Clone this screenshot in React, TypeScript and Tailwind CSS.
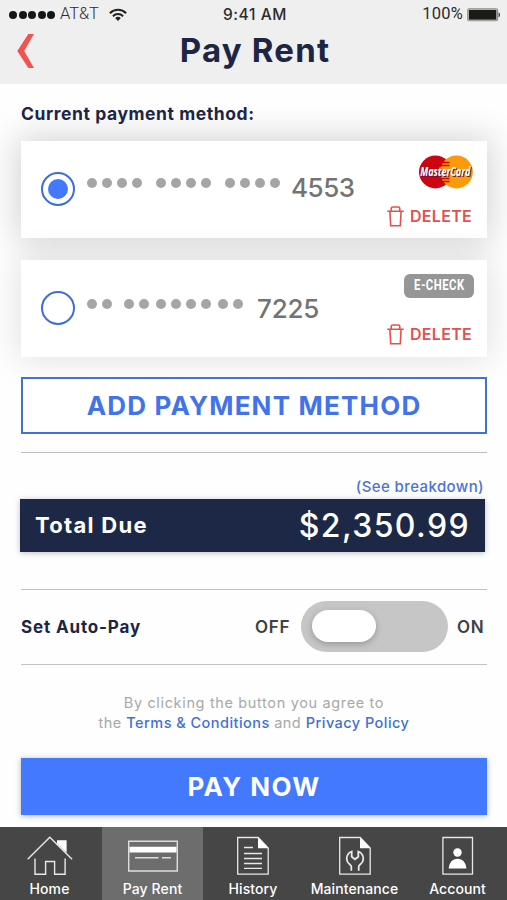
import { useState } from "react";

function Chevron() {
  return (
    <svg width="18" height="34" viewBox="0 0 18 34" className="block">
      <path d="M11.3 0H17L7.2 17 17 34h-5.7L.3 17z" fill="#f0544f" />
    </svg>
  );
}

function Wifi() {
  return (
    <svg width="18" height="14" viewBox="0 0 18 14" className="block" fill="none" stroke="#222" strokeWidth="2">
      <path d="M.9 5.2a11.5 11.5 0 0 1 16.2 0M3.9 8.2a7.2 7.2 0 0 1 10.2 0" />
      <path d="M9 13 6.2 10.1a4 4 0 0 1 5.6 0z" fill="#222" stroke="none" />
    </svg>
  );
}

function Battery() {
  return (
    <svg width="34" height="14" viewBox="0 0 34 14" className="block">
      <rect x=".75" y=".75" width="29.8" height="12" rx="1.5" fill="#efefef" stroke="#8c8c88" strokeWidth="1.2" />
      <rect x="1.8" y="1.8" width="27.6" height="9.9" fill="#1c1a15" />
      <path d="M31.5 4.5c2 .4 2 4.3 0 4.8z" fill="#444" />
    </svg>
  );
}

function Trash() {
  return (
    <svg width="17" height="21" viewBox="0 0 17 21" className="block" fill="none" stroke="#e2504f" strokeWidth="1.6">
      <path d="M.3 5.3h16.4M4.2 5.2V2.6Q4.200 1 5.800 1h5.400q1.600 0 1.600 1.600v2.600M2.900 5.500l.8 14.200h9.600l.8-14.200" />
    </svg>
  );
}

function MasterCard() {
  return (
    <svg width="56" height="34" viewBox="0 0 56 34" className="block overflow-visible">
      <circle cx="17.400" cy="17" r="16.400" fill="#cc0510" />
      <circle cx="38.500" cy="17" r="16.400" fill="#fb9a0b" />
      <path d="M23.500 7.500h8M22.500 10.500h9M22.500 23.500h9M23.500 26.500h8" stroke="#cc0510" strokeWidth="1.300" />
      <text x="3.300" y="21.900" textLength="50" lengthAdjust="spacingAndGlyphs" fontFamily="Open Sans" fontWeight="700" fontStyle="italic" fontSize="11.500" fill="#4c1b4b">MasterCard</text>
      <text x="2.300" y="21" textLength="50" lengthAdjust="spacingAndGlyphs" fontFamily="Open Sans" fontWeight="700" fontStyle="italic" fontSize="11.500" fill="#fff">MasterCard</text>
    </svg>
  );
}

function DotGroup({ count, className = "" }: { count: number; className?: string }) {
  return (
    <div className={`flex gap-[5px] ${className}`}>
      {Array.from({ length: count }, (_, i) => (
        <span key={i} className="size-[10px] rounded-full bg-[#a5a5a5]" />
      ))}
    </div>
  );
}

function Radio({ on, onClick }: { on: boolean; onClick: () => void }) {
  return (
    <button
      role="radio"
      aria-checked={on}
      onClick={onClick}
      className="flex size-[34px] shrink-0 items-center justify-center rounded-full border-[2.5px] border-[#3f6cd8] bg-white"
    >
      {on && <span className="size-[20px] rounded-full bg-[#4279ff]" />}
    </button>
  );
}

function Delete() {
  return (
    <button className="flex items-center gap-[6px] text-[16px] leading-[21px] font-semibold tracking-[0.3px] text-[#e2504f]">
      <Trash />
      <span>DELETE</span>
    </button>
  );
}

const tabs = [
  {
    label: "Home",
    shift: "pr-[3px]",
    icon: (
      <svg width="46" height="40" viewBox="0 0 46 40" fill="none" stroke="#e8e8e8" strokeWidth="1.4">
        <path d="M.7 23.3 22.8 1.2l22.3 22.1M8 22.5v15.8h10.6V25.5h9v12.8h10.5V22.5" />
        <path d="M30 4.2h9.6v12.6L30 7.5z" fill="#fff" stroke="none" />
      </svg>
    ),
  },
  {
    label: "Pay Rent",
    shift: "",
    icon: (
      <svg width="50" height="40" viewBox="0 0 50 40" fill="none" stroke="#dedede" strokeWidth="1.4">
        <path d="M.7 5.2h48.600v29.800H.7z" />
        <path d="M1.500 10.800h47v5.600h-47z" fill="#fff" stroke="none" />
        <path d="M7 21.700h23.500M34 21.700h9" />
      </svg>
    ),
  },
  {
    label: "History",
    shift: "pr-[2px]",
    icon: (
      <svg width="32" height="40" viewBox="0 0 32 40" fill="none" stroke="#e8e8e8" strokeWidth="1.3">
        <path d="M.7 1.5h20.5l10 10.5v26.2H.7z" />
        <path d="M21 1.3v10.9h10.3z" fill="#fff" stroke="none" />
        <path d="M7 11.5h9M7 17.5h18M7 22.5h18M7 27.5h18M7 32.3h18" />
      </svg>
    ),
  },
  {
    label: "Maintenance",
    shift: "pr-[2px]",
    icon: (
      <svg width="32" height="40" viewBox="0 0 32 40" fill="none" stroke="#e8e8e8" strokeWidth="1.3">
        <path d="M.7 1.5h20.5l10 10.5v26.2H.7z" />
        <path d="M21 1.3v10.9h10.3z" fill="#fff" stroke="none" />
        <path d="M12.300 34.800v-4.300c0-1.800-4.600-2.800-4.600-7.600 0-3.800 2.300-6.300 5-7.400v5.200l3.300 2.600 3.300-2.600v-5.200c2.700 1.100 5 3.600 5 7.400 0 4.800-4.600 5.800-4.600 7.600v4.300" strokeWidth="1.800" />
      </svg>
    ),
  },
  {
    label: "Account",
    shift: "pl-[2px]",
    icon: (
      <svg width="32" height="40" viewBox="0 0 32 40" fill="none" stroke="#e8e8e8" strokeWidth="1.3">
        <path d="M.9 1.5h29.600v36.700H.9z" />
        <circle cx="15.500" cy="16.500" r="4.200" fill="#fff" stroke="none" />
        <path d="M6.700 32.500c.6-6.200 3.800-9.700 8.800-9.700s8.300 3.500 8.900 9.700z" fill="#fff" stroke="none" />
      </svg>
    ),
  },
];

export default function App() {
  const [selected, setSelected] = useState(0);
  const [tab, setTab] = useState(1);
  const [auto, setAuto] = useState(false);

  return (
    <div className="flex h-[900px] w-[507px] flex-col overflow-hidden bg-[#fefefe] font-['Inter',sans-serif] text-[#1d2545]">
      <header className="h-[84px] shrink-0 bg-[#efefef]">
        <div className="grid h-[29px] grid-cols-[1fr_auto_1fr] items-center pr-[6px] pl-[9px] text-[16px] text-[#2c2c2c]">
          <div className="flex items-center">
            <div className="flex gap-[1.5px]">
              {[0, 1, 2, 3, 4].map((i) => (
                <span key={i} className="size-[8px] rounded-full bg-[#161616]" />
              ))}
            </div>
            <span className="ml-[5px] w-[49px] font-['Roboto',sans-serif] text-[16.5px] font-light tracking-[-0.1px]">AT&amp;T</span>
            <Wifi />
          </div>
          <span className="text-[15.5px] font-medium tracking-[0.6px]">9:41 AM</span>
          <div className="flex items-center justify-end gap-[4px]">
            <span className="font-['Roboto',sans-serif] text-[16.5px] tracking-[0.2px]">100%</span>
            <Battery />
          </div>
        </div>
        <div className="grid h-[44px] grid-cols-[40px_1fr_40px] items-center px-[17px]">
          <button aria-label="Back"><Chevron /></button>
          <h1 className="pb-[2px] pl-[3px] text-center text-[33px] leading-none font-bold tracking-[1.2px]">Pay Rent</h1>
        </div>
      </header>

      <main className="flex grow flex-col pr-[20px] pl-[21px]">
        <h2 className="relative z-10 mt-[17px] h-[26px] text-[17.5px] leading-[26px] font-bold tracking-[0.57px] whitespace-nowrap">Current payment method:</h2>
        <section className="mt-[14px] flex h-[97px] shrink-0 bg-white pr-[12px] pl-[20px] shadow-[0_0_32px_4px_rgba(0,0,0,0.17)]">
          <div className="flex grow pt-[31px]">
            <Radio on={selected === 0} onClick={() => setSelected(0)} />
            <div className="ml-[12px] flex items-start pt-[6px]">
              <DotGroup count={4} />
              <DotGroup count={4} className="ml-[14px]" />
              <DotGroup count={4} className="ml-[14px]" />
              <span className="ml-[11px] text-[26px] leading-[20px] font-medium tracking-[-0.5px] text-[#737373]">4553</span>
            </div>
          </div>
          <div className="flex flex-col items-end justify-between pt-[14px] pr-[1px] pb-[11px]">
            <MasterCard />
            <div className="pr-[2px]"><Delete /></div>
          </div>
        </section>
        <section className="relative mt-[22px] flex h-[97px] shrink-0 bg-white pr-[12px] pl-[20px] shadow-[0_0_32px_2px_rgba(0,0,0,0.12)]">
          <div className="flex grow pt-[31px]">
            <Radio on={selected === 1} onClick={() => setSelected(1)} />
            <div className="ml-[12px] flex items-start pt-[7.5px]">
              <DotGroup count={2} />
              <DotGroup count={2} className="ml-[12px]" />
              <DotGroup count={4} className="ml-[7px]" />
              <DotGroup count={2} className="ml-[7px]" />
              <span className="ml-[14px] text-[26px] leading-[20px] font-medium tracking-[-0.2px] text-[#737373]">7225</span>
            </div>
          </div>
          <div className="flex flex-col items-end justify-between pt-[14px] pr-[1px] pb-[12px]">
            <span className="flex h-[24px] w-[70px] items-center justify-center rounded-[6px] bg-[#969696] font-['Roboto',sans-serif] text-[14.5px] font-bold tracking-[0.6px] text-white">
              <span className="scale-x-[0.78]">E-CHECK</span>
            </span>
            <div className="pr-[2px]"><Delete /></div>
          </div>
        </section>

        <button className="relative mt-[20px] h-[57px] shrink-0 border-[2.5px] border-[#416fdb] bg-white text-[26px] font-bold tracking-[1.2px] text-[#4273ea]">ADD PAYMENT METHOD</button>
        <div className="mt-[18px] h-px shrink-0 bg-[#bdbdbd]" />

        <a className="mt-[23px] mr-[3px] self-end text-[15px] leading-[22px] font-medium tracking-[0.4px] text-[#4a72d8]">(See breakdown)</a>
        <div className="mt-[1px] mr-[2px] -ml-px flex h-[53px] shrink-0 items-center justify-between bg-[#1d2746] pr-[15px] pl-[15px] text-white shadow-[0_1px_6px_rgba(0,0,0,0.25)]">
          <span className="text-[22px] font-bold tracking-[1.3px]">Total Due</span>
          <span className="text-[32px] font-medium tracking-[1.4px]">$2,350.99</span>
        </div>

        <div className="mt-[37px] flex h-[76px] shrink-0 items-center border-y border-[#c2c2c2] text-[17px] font-semibold text-[#404040]">
          <span className="grow pt-px font-bold tracking-[0.85px] text-[#1d2545]">Set Auto-Pay</span>
          <span className="w-[46px] pt-px tracking-[0.7px]">OFF</span>
          <button
            role="switch"
            aria-checked={auto}
            onClick={() => setAuto(!auto)}
            className={`mb-[2px] flex h-[51px] w-[147px] items-center rounded-full bg-[#c6c6c6] px-[11px] ${auto ? "justify-end" : "justify-start"}`}
          >
            <span className="h-[32px] w-[64px] rounded-full bg-white shadow-[0_2px_6px_rgba(0,0,0,0.25)]" />
          </button>
          <span className="w-[39px] pt-px pl-[9px] tracking-[0.7px]">ON</span>
        </div>

        <p className="mt-[28px] text-center text-[14.5px] leading-[20px] tracking-[0.65px] text-[#a8a8a8]">
          By clicking the button you agree to
          <br />
          <span className="tracking-[0.46px]">
            the <a className="font-medium text-[#4270d6]">Terms &amp; Conditions</a> and <a className="font-medium text-[#4270d6]">Privacy Policy</a>
          </span>
        </p>
        <button className="mt-[25px] h-[57px] shrink-0 bg-[#4279ff] text-[26px] font-bold tracking-[1.4px] text-white shadow-[0_1px_6px_rgba(0,0,0,0.3)]">PAY NOW</button>
      </main>

      <nav className="grid h-[73px] shrink-0 grid-cols-[102px_101px_102px_101px_101px] bg-[#464646] text-[14px] font-medium text-white">
        {tabs.map((t, i) => (
          <button
            key={t.label}
            onClick={() => setTab(i)}
            className={`flex flex-col items-center pt-[9px] ${t.shift} ${tab === i ? "bg-[#6d6d6d]" : ""}`}
          >
            {t.icon}
            <span className="mt-[4px] leading-[18px] tracking-[0.1px]">{t.label}</span>
          </button>
        ))}
      </nav>
    </div>
  );
}
